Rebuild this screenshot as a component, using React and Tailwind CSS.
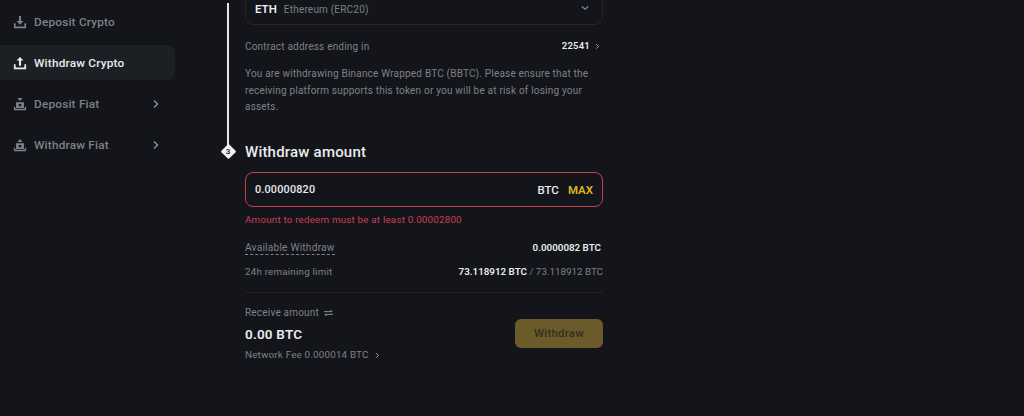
import React from "react";

const Chev = ({ className = "" }) => (
  <svg viewBox="0 0 8 10" className={className} fill="none" stroke="currentColor" strokeWidth="1.5"><path d="M2 1.500 5.500 5 2 8.500" /></svg>
);

const Tray = ({ up }) => (
  <svg viewBox="0 0 16 16" className="w-[14px] h-[14px]" fill="currentColor">
    <path d="M1 9.500h2V13h10V9.500h2V15H1z" />
    {up ? <path d="M8 1l4 4.200H9.200V11H6.800V5.200H4z" /> : <path d="M6.800 1h2.400v5.800H12L8 11 4 6.800h2.800z" />}
  </svg>
);

const Fiat = ({ up }) => (
  <svg viewBox="0 0 16 16" className="w-[14px] h-[14px]" fill="currentColor">
    <path d="M1 11h1.500v2.500h11V11H15v4H1z" />
    <path fillRule="evenodd" d="M3.500 6h9v6.500h-9zM6.500 8v2.500h3V8z" />
    {up ? <path d="M8 1l3 3.500H5z" /> : <path d="M5 1h6L8 4.500z" />}
  </svg>
);

const NavItem = ({ label, icon, active, chevron }) => (
  <div className={`h-[35px] mb-[6px] flex items-center pl-[13px] pr-[15px] rounded-r-lg ${active ? "bg-[#1c1f24] text-[#eaecef]" : "text-[#7d8189]"}`}>
    <span className="w-[21px] shrink-0">{icon}</span>
    <span className="flex-1 pt-[3px] text-[11.800px] tracking-[0.2px] font-medium whitespace-nowrap">{label}</span>
    {chevron && <Chev className="w-[8px] h-[10px] text-[#848e9c]" />}
  </div>
);

export default function App() {
  return (
    <div className="w-[1024px] h-[416px] overflow-hidden bg-[#14151a] flex font-['Roboto','Noto_Sans',sans-serif]">
      <aside className="w-[175px] shrink-0 pt-[4px]">
        <NavItem label="Deposit Crypto" icon={<Tray />} />
        <NavItem label="Withdraw Crypto" icon={<Tray up />} active />
        <NavItem label="Deposit Fiat" icon={<Fiat />} chevron />
        <NavItem label="Withdraw Fiat" icon={<Fiat up />} chevron />
      </aside>

      <div className="w-[45px] shrink-0"></div>

      <div className="w-[16px] shrink-0 flex flex-col items-center pt-[3px] mr-[9px]">
        <div className="w-[2px] h-[143px] bg-[#e4e6e9]"></div>
        <div className="relative w-[11px] h-[11px] flex items-center justify-center">
          <div className="absolute inset-0 rotate-45 rounded-[1px] bg-[#f0f1f2]"></div>
          <span className="relative text-[8px] font-semibold text-[#14151a]">3</span>
        </div>
      </div>

      <main className="w-[358px] shrink-0 -mt-[10px]">
        <div className="h-[35px] border border-[#24262b] rounded-lg flex items-center px-[9px] pt-[4px]">
          <span className="text-[11.500px] font-semibold text-[#eaecef] mr-[7px]">ETH</span>
          <span className="text-[10px] tracking-[0.2px] text-[#7d8189] flex-1">Ethereum (ERC20)</span>
          <svg viewBox="0 0 10 6" className="w-[8px] h-[6px] mr-[4px] mb-[4px] text-[#848e9c]" fill="none" stroke="currentColor" strokeWidth="1.500"><path d="M1 1l4 3.500L9 1" /></svg>
        </div>

        <div className="flex items-center justify-between mt-[13px] h-[16px] pr-[3px]">
          <span className="text-[10px] tracking-[0.2px] text-[#7d8189]">Contract address ending in</span>
          <span className="flex items-center gap-[5px] text-[9.500px] tracking-[0.2px] font-semibold text-[#eaecef]">22541 <Chev className="w-[5px] h-[7px] text-[#b0b4ba]" /></span>
        </div>

        <p className="mt-[12px] text-[10px] tracking-[0.2px] leading-[16.500px] text-[#7d8189] w-[352px]">
          You are withdrawing Binance Wrapped BTC (BBTC). Please ensure that the receiving platform supports this token or you will be at risk of losing your assets.
        </p>

        <h2 className="mt-[26px] h-[20px] leading-[20px] text-[15px] tracking-[0.2px] font-medium text-[#eaecef]">Withdraw amount</h2>

        <div className="mt-[10px] h-[35px] border border-[#c0404f] rounded-lg flex items-center px-[9px] pt-[3px]">
          <span className="flex-1 text-[10.800px] tracking-[0.2px] font-medium text-[#eaecef]">0.00000820</span>
          <span className="text-[11.500px] font-medium text-[#eaecef] mr-[9px]">BTC</span>
          <span className="text-[11.500px] font-semibold text-[#dcb51f]">MAX</span>
        </div>

        <div className="mt-[6px] h-[14px] leading-[14px] text-[9.800px] tracking-[0.2px] text-[#c93f57]">Amount to redeem must be at least 0.00002800</div>

        <div className="flex items-start justify-between mt-[15px] h-[15px] pr-[2px]">
          <span className="text-[10.200px] tracking-[0.2px] leading-[12px] text-[#7d8189] border-b border-dashed border-[#7d8189]">Available Withdraw</span>
          <span className="text-[9.800px] leading-[12px] font-semibold text-[#eaecef]">0.0000082 BTC</span>
        </div>

        <div className="flex items-center justify-between mt-[9px] h-[14px]">
          <span className="text-[9.800px] tracking-[0.2px] text-[#7d8189]">24h remaining limit</span>
          <span className="text-[9.800px] text-[#7d8189]"><span className="font-semibold text-[#eaecef]">73.118912 BTC</span> / 73.118912 BTC</span>
        </div>

        <div className="mt-[12px] border-t border-[#202227]"></div>

        <div className="flex items-center justify-between mt-[13px]">
          <div>
            <div className="flex items-center gap-[5px] h-[14px] text-[10px] tracking-[0.2px] text-[#7d8189]">
              Receive amount
              <svg viewBox="0 0 10 8" className="w-[9px] h-[8px] text-[#9a9ea5]" fill="none" stroke="currentColor" strokeWidth="1"><path d="M0 2.500h9L7 .5M10 5.500H1l2 2" /></svg>
            </div>
            <div className="mt-[5px] h-[18px] leading-[18px] text-[13.500px] tracking-[0.2px] font-semibold text-[#eaecef]">0.00 BTC</div>
            <div className="mt-[6px] flex items-center gap-[6px] h-[14px] text-[9.800px] tracking-[0.2px] text-[#7d8189]">
              Network Fee 0.000014 BTC
              <Chev className="w-[5px] h-[7px] text-[#b0b4ba]" />
            </div>
          </div>
          <div className="w-[88px] h-[29px] mb-[1px] rounded-md bg-[#6b5a2a] flex items-center justify-center text-[11.500px] tracking-[0.2px] font-medium text-[#33301f]">Withdraw</div>
        </div>
      </main>
    </div>
  );
}
